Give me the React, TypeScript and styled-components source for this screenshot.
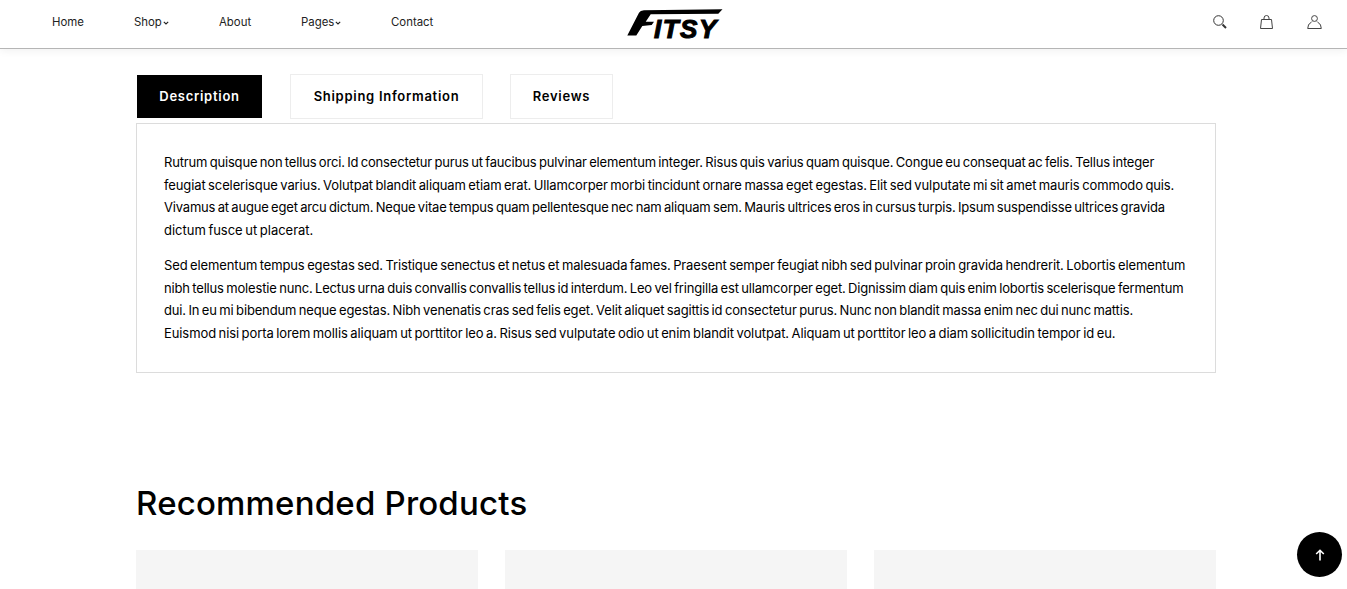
import React from 'react'
import styled, { createGlobalStyle } from 'styled-components'

const GlobalStyle = createGlobalStyle`
  html, body {
    margin: 0;
    padding: 0;
    background: #fff;
    overflow: hidden;
    height: 589px;
    font-family: 'Inter', 'Liberation Sans', sans-serif;
    color: #000;
  }
  * { box-sizing: border-box; }
`

const navItems = [
  { label: 'Home', width: 82 },
  { label: 'Shop', width: 85, caret: true },
  { label: 'About', width: 82 },
  { label: 'Pages', width: 90, caret: true },
  { label: 'Contact', width: 60 },
]

const tabs = [
  { label: 'Description', width: 127, active: true },
  { label: 'Shipping Information', width: 193 },
  { label: 'Reviews', width: 103 },
]

// the tracking keeps each line as long as it is in the original font
const descriptionOne = [
  { text: 'Rutrum quisque non tellus orci. Id consectetur purus ut faucibus pulvinar elementum integer. Risus quis varius quam quisque. Congue eu consequat ac felis. Tellus integer', tracking: -0.18 },
  { text: 'feugiat scelerisque varius. Volutpat blandit aliquam etiam erat. Ullamcorper morbi tincidunt ornare massa eget egestas. Elit sed vulputate mi sit amet mauris commodo quis.', tracking: -0.117 },
  { text: 'Vivamus at augue eget arcu dictum. Neque vitae tempus quam pellentesque nec nam aliquam sem. Mauris ultrices eros in cursus turpis. Ipsum suspendisse ultrices gravida', tracking: -0.19 },
  { text: 'dictum fusce ut placerat.', tracking: -0.02 },
]

const descriptionTwo = [
  { text: 'Sed elementum tempus egestas sed. Tristique senectus et netus et malesuada fames. Praesent semper feugiat nibh sed pulvinar proin gravida hendrerit. Lobortis elementum', tracking: -0.124 },
  { text: 'nibh tellus molestie nunc. Lectus urna duis convallis convallis tellus id interdum. Leo vel fringilla est ullamcorper eget. Dignissim diam quis enim lobortis scelerisque fermentum', tracking: -0.172 },
  { text: 'dui. In eu mi bibendum neque egestas. Nibh venenatis cras sed felis eget. Velit aliquet sagittis id consectetur purus. Nunc non blandit massa enim nec dui nunc mattis.', tracking: -0.148 },
  { text: 'Euismod nisi porta lorem mollis aliquam ut porttitor leo a. Risus sed vulputate odio ut enim blandit volutpat. Aliquam ut porttitor leo a diam sollicitudin tempor id eu.', tracking: -0.094 },
]

const Caret = () => (
  <CaretIcon viewBox="0 0 6 4">
    <path d="M.8.8 3 3l2.2-2.2" fill="none" stroke="#222" strokeWidth="1.100" />
  </CaretIcon>
)

const Logo = () => (
  <LogoMark width="97" height="30" viewBox="0 0 97 30">
    <path d="M.3 26.500 12 3.700Q13.200 1.500 17 1.300L95.500.3 91.300 4.700 23.700 5.300 18.700 12.700H27L24.700 16 15.300 17 9.300 26.500Z" fill="#000" />
    <text x="27" y="28.500" fontFamily="'Liberation Sans', sans-serif" fontWeight="700" fontStyle="italic" fontSize="26" letterSpacing="1.500" stroke="#000" strokeWidth="1.100">ITSY</text>
  </LogoMark>
)

const App: React.FC = () => {
  return (
    <Page>
      <GlobalStyle />
      <Header>
        <Nav>
          {navItems.map(item => (
            <NavItem key={item.label} $width={item.width}>
              {item.label}
              {item.caret && <Caret />}
            </NavItem>
          ))}
        </Nav>
        <Logo />
        <Actions>
          <svg width="14" height="14" viewBox="0 0 14 14" fill="none" stroke="#333">
            <circle cx="5.500" cy="5.500" r="4.800" strokeWidth="1" />
            <path d="M9.500 9.500l3.500 3.500" strokeWidth="2" />
          </svg>
          <svg width="13" height="14" viewBox="0 0 13 14" fill="none" stroke="#444" strokeWidth="1">
            <path d="M1.500 4.500h10l1 9H.5z" />
            <path d="M4 4.500V3a2.500 2.500 0 0 1 5 0v1.500" />
          </svg>
          <UserIcon width="15" height="14" viewBox="0 0 15 14" fill="none" stroke="#444" strokeWidth="1">
            <circle cx="7.500" cy="3.500" r="2.900" />
            <path d="M5 6.500C4 8 2 8.500 1.500 10L.7 13.500h13.600L13.500 10C13 8.500 11 8 10 6.500" />
          </UserIcon>
        </Actions>
      </Header>
      <Main>
        <Tabs>
          {tabs.map(tab => (
            <Tab key={tab.label} $active={tab.active} $width={tab.width}>{tab.label}</Tab>
          ))}
        </Tabs>
        <Panel>
          <Paragraph>
            {descriptionOne.map(line => <Line key={line.text} $tracking={line.tracking}>{line.text}</Line>)}
          </Paragraph>
          <Paragraph>
            {descriptionTwo.map(line => <Line key={line.text} $tracking={line.tracking}>{line.text}</Line>)}
          </Paragraph>
        </Panel>
        <Heading>Recommended Products</Heading>
        <Products>
          <ProductCard />
          <ProductCard />
          <ProductCard />
        </Products>
      </Main>
      <BackToTop aria-label="Back to top">
        <svg width="12" height="12" viewBox="0 0 12 12" fill="none" stroke="#fff" strokeWidth="1.600">
          <path d="M6 11.500V1.500M2.200 5 6 1.300 9.800 5" />
        </svg>
      </BackToTop>
    </Page>
  )
}

export default App

const Page = styled.div`
  width: 1347px;
  height: 589px;
  overflow: hidden;
  position: relative;
`
const Header = styled.header`
  height: 49px;
  display: grid;
  grid-template-columns: 575px auto 1fr;
  align-items: center;
  background: #fff;
  border-bottom: 1px solid #b5b5b5;
  box-shadow: 0 2px 8px rgba(0, 0, 0, 0.06);
  padding: 0 25px 4px 52px;
`
const Nav = styled.nav`
  display: flex;
  align-items: center;
`
const NavItem = styled.a<{ $width: number }>`
  width: ${props => props.$width}px;
  font-size: 11.400px;
  line-height: 14px;
  color: #222;
  white-space: nowrap;
  display: flex;
  align-items: center;
`
const CaretIcon = styled.svg`
  width: 6px;
  height: 4px;
  margin-left: 1px;
  margin-top: 2px;
`
const LogoMark = styled.svg`
  display: block;
  margin-top: 3px;
  overflow: visible;
`
const Actions = styled.div`
  display: flex;
  justify-content: flex-end;
  align-items: center;
  gap: 33px;
`
const UserIcon = styled.svg`
  margin-left: 1px;
`
const Main = styled.main`
  width: 1080px;
  margin: 25px 0 0 136px;
`
const Tabs = styled.div`
  display: flex;
  gap: 27px;
  height: 45px;
`
const Tab = styled.div<{ $active?: boolean; $width: number }>`
  display: flex;
  align-items: center;
  justify-content: center;
  width: ${props => props.$width}px;
  height: 45px;
  padding-bottom: 2px;
  font-size: 13px;
  font-weight: 600;
  letter-spacing: 0.72px;
  white-space: nowrap;
  color: ${props => (props.$active ? '#fff' : '#000')};
  background: ${props => (props.$active ? '#000' : '#fff')};
  background-clip: padding-box;
  border: 1px solid ${props => (props.$active ? '#fff' : '#ededed')};
`
const Panel = styled.section`
  margin-top: 4px;
  height: 250px;
  border: 1px solid #dcdcdc;
  padding: 27px 27px 0;
  display: flex;
  flex-direction: column;
  gap: 12px;
`
const Paragraph = styled.div`
  font-size: 13px;
  line-height: 22.700px;
  word-spacing: -1px;
`
const Line = styled.div<{ $tracking: number }>`
  white-space: nowrap;
  letter-spacing: ${props => props.$tracking}px;
`
const Heading = styled.h2`
  margin: 108px 0 0;
  font-size: 33px;
  line-height: 44px;
  font-weight: 500;
  letter-spacing: 0.2px;
`
const Products = styled.div`
  display: grid;
  grid-template-columns: repeat(3, 342px);
  gap: 27px;
  margin-top: 25px;
`
const ProductCard = styled.div`
  height: 300px;
  background: #f5f5f5;
`
const BackToTop = styled.button`
  position: absolute;
  left: 1297px;
  top: 532px;
  width: 45px;
  height: 45px;
  border: none;
  border-radius: 50%;
  background: #000;
  display: flex;
  align-items: center;
  justify-content: center;
  padding: 0;
`
